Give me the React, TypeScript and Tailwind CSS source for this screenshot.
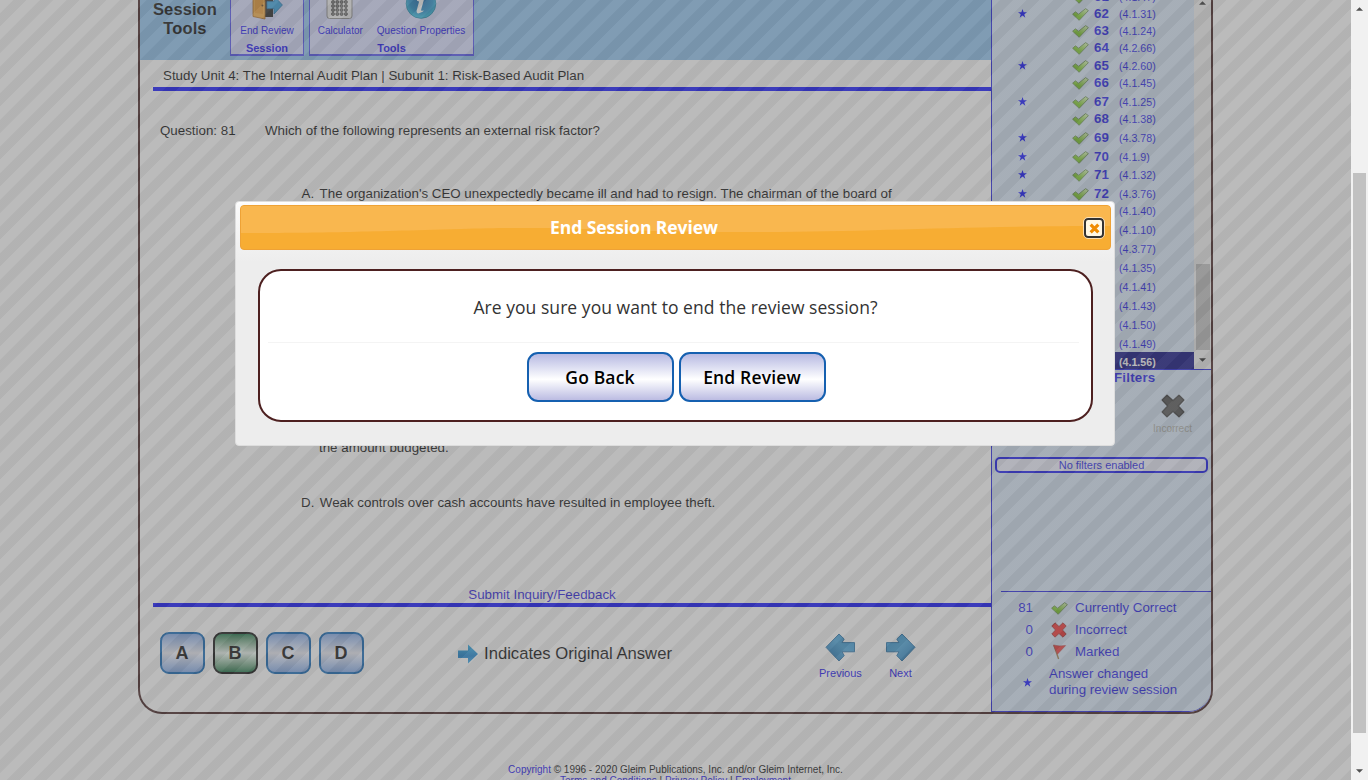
import type { ReactNode } from "react";

type Row = { n?: number; code: string; star?: boolean; h: string };

const rows: Row[] = [
  { n: 61, code: "(4.1.47)", h: "h-[17px]" },
  { n: 62, code: "(4.1.31)", star: true, h: "h-[17px]" },
  { n: 63, code: "(4.1.24)", h: "h-[17px]" },
  { n: 64, code: "(4.2.66)", h: "h-[18px]" },
  { n: 65, code: "(4.2.60)", star: true, h: "h-[17px]" },
  { n: 66, code: "(4.1.45)", h: "h-[19px]" },
  { n: 67, code: "(4.1.25)", star: true, h: "h-[17px]" },
  { n: 68, code: "(4.1.38)", h: "h-[19px]" },
  { n: 69, code: "(4.3.78)", star: true, h: "h-[19px]" },
  { n: 70, code: "(4.1.9)", star: true, h: "h-[18px]" },
  { n: 71, code: "(4.1.32)", star: true, h: "h-[19px]" },
  { n: 72, code: "(4.3.76)", star: true, h: "h-[17px]" },
  { code: "(4.1.40)", h: "h-[19px]" },
  { code: "(4.1.10)", h: "h-[19px]" },
  { code: "(4.3.77)", h: "h-[19px]" },
  { code: "(4.1.35)", h: "h-[19px]" },
  { code: "(4.1.41)", h: "h-[19px]" },
  { code: "(4.1.43)", h: "h-[19px]" },
  { code: "(4.1.50)", h: "h-[19px]" },
  { code: "(4.1.49)", h: "h-[18px]" },
];

function Star() {
  return (
    <svg viewBox="0 0 10 10" className="size-[9px]" fill="#0000ff">
      <path d="M5 0l1.25 3.5H10L7 5.8 8.1 9.6 5 7.3 1.9 9.6 3 5.8 0 3.5h3.75z" />
    </svg>
  );
}

function Check() {
  return (
    <svg viewBox="0 0 17 13" className="h-[13px] w-[17px]">
      <defs>
        <linearGradient id="ck" x1="0.2" y1="1" x2="0.9" y2="0">
          <stop offset="0.3" stopColor="#6fc414" />
          <stop offset="1" stopColor="#d8f4b8" />
        </linearGradient>
      </defs>
      <path d="M.6 6.2L3.4 3.8 6.6 6.2 13.6 .6 16.4 2.6 7.2 12.3z" fill="url(#ck)" stroke="#55803c" strokeWidth="0.8" strokeLinejoin="round" />
    </svg>
  );
}

function Cross({ fill, edge, className }: { fill: string; edge: string; className: string }) {
  return (
    <svg viewBox="0 0 24 24" className={className}>
      <path d="M6 1.2L12 6.8 18 1.2 22.8 6 17.2 12 22.8 18 18 22.8 12 17.2 6 22.8 1.2 18 6.8 12 1.2 6z" fill={fill} stroke={edge} strokeWidth="1.4" strokeLinejoin="round" />
    </svg>
  );
}

function Flag() {
  return (
    <svg viewBox="0 0 15 16" className="h-4 w-[15px]">
      <path d="M2 1.5L6.6 15" stroke="#9a7440" strokeWidth="1.4" />
      <path d="M1.4 1Q7 2.6 13.6 1.6L5.4 10.2z" fill="#ee2c2c" stroke="#b03030" strokeWidth="0.6" />
    </svg>
  );
}

function BigArrow({ flip }: { flip?: boolean }) {
  return (
    <svg viewBox="0 0 31 29" className={flip ? "h-[29px] w-[31px] -scale-x-100" : "h-[29px] w-[31px]"}>
      <defs>
        <linearGradient id="ba" x1="0" y1="0" x2="1" y2="1">
          <stop offset="0" stopColor="#2a90d0" />
          <stop offset="0.45" stopColor="#3fa2dc" />
          <stop offset="1" stopColor="#0b66aa" />
        </linearGradient>
      </defs>
      <path d="M1.5 9.6H14L11.8 6 17 1 30 14.3 17 28 11.8 22.6 14 18.8H1.5z" fill="url(#ba)" stroke="#1a6aa4" strokeWidth="1" />
    </svg>
  );
}

function SmallArrow() {
  return (
    <svg viewBox="0 0 22 20" className="h-5 w-[22px]">
      <defs>
        <linearGradient id="sa" x1="0" y1="0" x2="0" y2="1">
          <stop offset="0" stopColor="#2bb2ec" />
          <stop offset="0.6" stopColor="#0a7acc" />
          <stop offset="1" stopColor="#2ea6ea" />
        </linearGradient>
      </defs>
      <path d="M1 6.5H11V.6L21 10 11 19.6V14H1z" fill="url(#sa)" />
    </svg>
  );
}

function Door() {
  return (
    <svg viewBox="0 0 32 32" className="size-8">
      <rect x="4" y="0" width="18" height="29" fill="#1c1c1c" />
      <path d="M2 0H14V31L2 28.5z" fill="#f5a93a" stroke="#a8600c" strokeWidth="0.8" />
      <path d="M4 2h8v24l-8-1z" fill="#eb9526" />
      <circle cx="11.4" cy="17.5" r="1" fill="#5a3208" />
      <path d="M16 13.6h7V8l8.4 9L23 26v-5.4h-7z" fill="#2e9fe0" stroke="#1470ac" strokeWidth="0.8" />
    </svg>
  );
}

function Calculator() {
  return (
    <svg viewBox="0 0 28 32" className="h-8 w-7">
      <rect x="1" y="-6" width="25" height="36.5" rx="2.5" fill="#efefef" stroke="#8a8a8a" />
      {[9, 13, 17, 21, 25].map((y) => [7, 11.3, 15.6, 19.9].map((x) => <circle key={`${x}-${y}`} cx={x} cy={y + 1} r="1.55" fill="#777" stroke="#222" strokeWidth="0.6" />))}
    </svg>
  );
}

function Info() {
  return (
    <svg viewBox="0 0 32 32" className="size-8">
      <defs>
        <radialGradient id="inf" cx="0.5" cy="0.4" r="0.6">
          <stop offset="0" stopColor="#0b5ea8" />
          <stop offset="0.65" stopColor="#1487c4" />
          <stop offset="1" stopColor="#2bc4e6" />
        </radialGradient>
      </defs>
      <circle cx="16" cy="15.5" r="14.8" fill="url(#inf)" stroke="#1a8cb4" />
      <circle cx="18.3" cy="5.8" r="2.6" fill="#fff" />
      <path d="M12.2 11.6l7-1-3 11q-.5 2.2 2.4.6l-.5 1.4q-7.4 4.2-6.4-1.4l2.2-8q.3-1.5-1.9-1.2z" fill="#fff" />
    </svg>
  );
}

function Tool({ icon, label }: { icon: ReactNode; label: string }) {
  return (
    <div className="flex flex-col items-center">
      {icon}
      <span className="mt-[5px] text-[10px] leading-[12px] whitespace-nowrap">{label}</span>
    </div>
  );
}

function ToolGroup({ title, width, children }: { title: string; width: string; children: ReactNode }) {
  return (
    <div className={`${width} flex h-full flex-col items-center justify-end border-x border-b-2 border-[#4646f0] bg-[#d6dcff] text-[#0a00f0]`}>
      <div className="flex gap-[14px]">{children}</div>
      <div className="mt-[5px] text-[11px] leading-[12px] font-bold">{title}</div>
    </div>
  );
}

function Choice({ letter, selected }: { letter: string; selected?: boolean }) {
  const look = selected
    ? "border-black from-[#0a7040] via-[#f4fff8] to-[#0a7040]"
    : "border-[#0460b4] from-[#7ca4e4] via-[#f4f6ff] to-[#7ca4e4]";
  return (
    <div className={`${look} flex h-[42px] w-[45px] items-center justify-center rounded-[9px] border-2 bg-gradient-to-b text-[18px] font-bold text-black`}>
      {letter}
    </div>
  );
}

function Triangle({ up, color = "#505050" }: { up?: boolean; color?: string }) {
  return (
    <svg viewBox="0 0 8 4" className="h-1 w-[7px]" fill={color}>
      <path d={up ? "M0 4L4 0l4 4z" : "M0 0h8L4 4z"} />
    </svg>
  );
}

function Legend({ count, icon, label }: { count: string; icon: ReactNode; label: string }) {
  return (
    <div className="flex h-[22px] items-center">
      <span className="w-[41px] text-right">{count}</span>
      <span className="ml-[17px] flex w-[18px] justify-center">{icon}</span>
      <span className="ml-[7px]">{label}</span>
    </div>
  );
}

function MainPanel() {
  return (
    <main className="flex w-[851px] flex-col">
      <div className="flex h-[60px] bg-[#89c1f0]">
        <h1 className="w-[90px] text-center text-[16.5px] leading-[19px] font-bold tracking-[0.1px] text-black">
          Session
          <br />
          Tools
        </h1>
        <div className="flex h-[56px] gap-[5px]">
          <ToolGroup title="Session" width="w-[74px]">
            <Tool icon={<Door />} label="End Review" />
          </ToolGroup>
          <ToolGroup title="Tools" width="w-[165px]">
            <Tool icon={<Calculator />} label="Calculator" />
            <Tool icon={<Info />} label="Question Properties" />
          </ToolGroup>
        </div>
      </div>
      <div className="ml-[13px] flex h-[31px] items-center border-b-4 border-[#0000ff] pt-[5px] pl-[10px]">
        Study Unit 4: The Internal Audit Plan | Subunit 1: Risk-Based Audit Plan
      </div>
      <div className="mt-8 flex pl-5 leading-4">
        <span className="w-[105px]">Question: 81</span>
        <span>Which of the following represents an external risk factor?</span>
      </div>
      <div className="mt-[47px] flex gap-[5.5px] pl-[161.5px] leading-4">
        <span>A.</span>
        <span>The organization's CEO unexpectedly became ill and had to resign. The chairman of the board of</span>
      </div>
      <div className="mt-[238px] pl-[179px] leading-4">the amount budgeted.</div>
      <div className="mt-[39px] flex gap-[5.5px] pl-[161px] leading-4">
        <span>D.</span>
        <span>Weak controls over cash accounts have resulted in employee theft.</span>
      </div>
      <div className="mt-auto ml-[13px] flex h-5 items-center justify-center border-b-4 border-[#0000ff] pr-[60px] text-[#1a10e0]">
        <span>Submit Inquiry/Feedback</span>
      </div>
      <div className="flex h-[105px] pl-[19.5px]">
        <div className="mt-[25px] flex gap-[8px]">
          <Choice letter="A" />
          <Choice letter="B" selected />
          <Choice letter="C" />
          <Choice letter="D" />
        </div>
        <div className="mt-[36.5px] ml-[93px] flex h-5 items-center gap-[5.5px] text-[16.67px]">
          <SmallArrow />
          <span>Indicates Original Answer</span>
        </div>
        <div className="mt-[26px] ml-[147px] flex gap-[26px] text-[11px] leading-[13px] text-[#0a00f0]">
          <div className="flex w-[43px] flex-col items-center gap-[5px]">
            <BigArrow flip />
            <span>Previous</span>
          </div>
          <div className="flex w-[25px] flex-col items-center gap-[5px]">
            <BigArrow />
            <span>Next</span>
          </div>
        </div>
      </div>
    </main>
  );
}

function SidePanel() {
  return (
    <aside className="flex h-full w-[220px] flex-col rounded-br-[22px] border-b border-l border-[#1414e0] bg-[#d6e6f8] text-[#1410e8]">
      <div className="flex h-[370px] shrink-0 overflow-hidden border-b border-[#1414e0]">
        <div className="mt-[-13px] flex w-[202px] shrink-0 flex-col">
          {rows.map((r) => (
            <div key={r.code} className={`${r.h} flex shrink-0 items-start`}>
              <div className="flex h-[18px] w-full items-center">
                <span className="ml-[26px] w-[9px]">{r.star && <Star />}</span>
                <span className="ml-[45px] w-[17px] pt-[2px]">{r.n && <Check />}</span>
                <span className="ml-[5px] w-[25px] pt-[2px] text-[13.33px] leading-4 font-bold">{r.n}</span>
                <span className="pt-px text-[10.67px]">{r.code}</span>
              </div>
            </div>
          ))}
          <div className="flex h-[18px] items-center bg-[#00007a] pt-[2px] pl-[127px] text-[10.67px] font-bold text-white">(4.1.56)</div>
        </div>
        <div className="flex w-[17px] flex-col items-center bg-[#f1f1f1]">
          <div className="flex h-[6px] items-center"><Triangle up color="#222" /></div>
          <div className="mt-[258px] h-[86px] w-[14px] bg-[#bcbcbc]" />
          <div className="mt-[8px]"><Triangle color="#222" /></div>
        </div>
      </div>
      <div className="pl-[122px] text-[13.33px] leading-[15px] font-bold tracking-[0.2px]">Filters</div>
      <div className="mt-[9px] ml-[150px] flex w-[61px] flex-col items-center">
        <Cross fill="#484848" edge="#333" className="size-6" />
        <span className="mt-[5px] text-[10px] leading-[12px] text-[#a8a8a0]">Incorrect</span>
      </div>
      <div className="mt-[22px] ml-[3px] flex h-4 w-[213px] items-center justify-center rounded-[5px] border-2 border-[#0a0af0] bg-[#eef0ff] text-[11px] leading-none">
        No filters enabled
      </div>
      <div className="mt-auto ml-[9px] h-px bg-[#1414e0]" />
      <div className="mt-[5px] mb-[13px] text-[13.33px]">
        <Legend count="81" icon={<Check />} label="Currently Correct" />
        <Legend count="0" icon={<Cross fill="#f02020" edge="#a02020" className="size-4" />} label="Incorrect" />
        <Legend count="0" icon={<Flag />} label="Marked" />
        <div className="mt-[3px] flex items-center leading-4">
          <span className="ml-[31px]"><Star /></span>
          <span className="ml-[17px]">
            Answer changed
            <br />
            during review session
          </span>
        </div>
      </div>
    </aside>
  );
}

function DialogButton({ children }: { children: ReactNode }) {
  return (
    <button className="h-[50px] w-[147px] rounded-[11px] border-2 border-[#1560b0] bg-gradient-to-b from-[#b8bae2] via-white via-55% to-[#bcbce2] text-[17.5px] font-semibold tracking-[0.15px] text-black">
      {children}
    </button>
  );
}

function Dialog() {
  return (
    <div className="absolute top-[200.5px] left-[235px] flex h-[245px] w-[880px] flex-col rounded-[4px] border border-[#dddddd] bg-[#eeeeee] bg-linear-[180deg,#ffffff_0px,#fafafa_4px,#ededed_60px] pt-[3.5px]">
      <div className="relative mr-[3px] ml-[4px] flex h-[45px] shrink-0 items-center justify-center overflow-hidden rounded-[4px] border border-[#eea236] bg-[#f7ad33]">
        <svg viewBox="0 0 870 43" className="absolute inset-0 h-full w-full" preserveAspectRatio="none">
          <path d="M0 0H870V20C700 20 620 27 480 26S330 20 220 23S80 27 0 27z" fill="#f9b74f" />
        </svg>
        <h2 className="relative mr-[83px] font-['Open_Sans',sans-serif] text-[17.5px] font-bold tracking-[-0.07px] text-white">End Session Review</h2>
        <button className="absolute top-[12px] right-[6px] flex size-[20px] items-center justify-center rounded-[4px] border-2 border-[#333] bg-[#fff8e4] outline-1 outline-white/60">
          <svg viewBox="0 0 10 10" className="size-[11px]">
            <path d="M1.5 1.5l7 7m0-7l-7 7" stroke="#f08c00" strokeWidth="2.9" />
          </svg>
        </button>
      </div>
      <div className="mt-[19px] ml-[22px] flex h-[153px] w-[835px] flex-col items-center rounded-[23px] border-2 border-[#4d2020] bg-white font-['Open_Sans',sans-serif]">
        <p className="mt-[24px] text-[17.5px] leading-6 tracking-[0.05px] text-[#333]">Are you sure you want to end the review session?</p>
        <div className="mt-[23px] mr-[5px] h-px w-[811px] bg-[#f4f4f4]" />
        <div className="mt-[9px] ml-px flex gap-[5px]">
          <DialogButton>Go Back</DialogButton>
          <DialogButton>End Review</DialogButton>
        </div>
      </div>
    </div>
  );
}

export default function App() {
  return (
    <div className="relative flex h-[780px] w-[1368px] overflow-hidden bg-white font-['Liberation_Sans',Arial,sans-serif] text-[13.33px] text-black">
      <div className="flex w-[1351px] flex-col">
        <div className="ml-[138px] flex h-[714px] w-[1075px] shrink-0 overflow-hidden rounded-b-[24px] border-x-2 border-b-2 border-[#381414]">
          <MainPanel />
          <SidePanel />
        </div>
        <footer className="mt-[50px] text-center text-[10px] leading-[11px]">
          <span className="text-[#0a00f0]">Copyright</span> © 1996 - 2020 Gleim Publications, Inc. and/or Gleim Internet, Inc.
          <br />
          <span className="text-[#0a00f0]">Terms and Conditions</span> | <span className="text-[#0a00f0]">Privacy Policy</span> | <span className="text-[#0a00f0]">Employment</span>
        </footer>
      </div>
      <div className="flex w-[17px] flex-col items-center bg-[#f1f1f1]">
        <div className="mt-[7px] flex"><Triangle up /></div>
        <div className="mt-[162px] h-[560px] w-[13px] bg-[#c1c1c1]" />
        <div className="mt-[36px] flex"><Triangle /></div>
      </div>
      <div className="absolute top-0 left-0 h-[780px] w-[1351px] bg-[repeating-linear-gradient(135deg,#777777_0px,#777777_9.1px,#666666_9.8px,#666666_18.5px,#777777_18.856px)] opacity-50" />
      <Dialog />
    </div>
  );
}
